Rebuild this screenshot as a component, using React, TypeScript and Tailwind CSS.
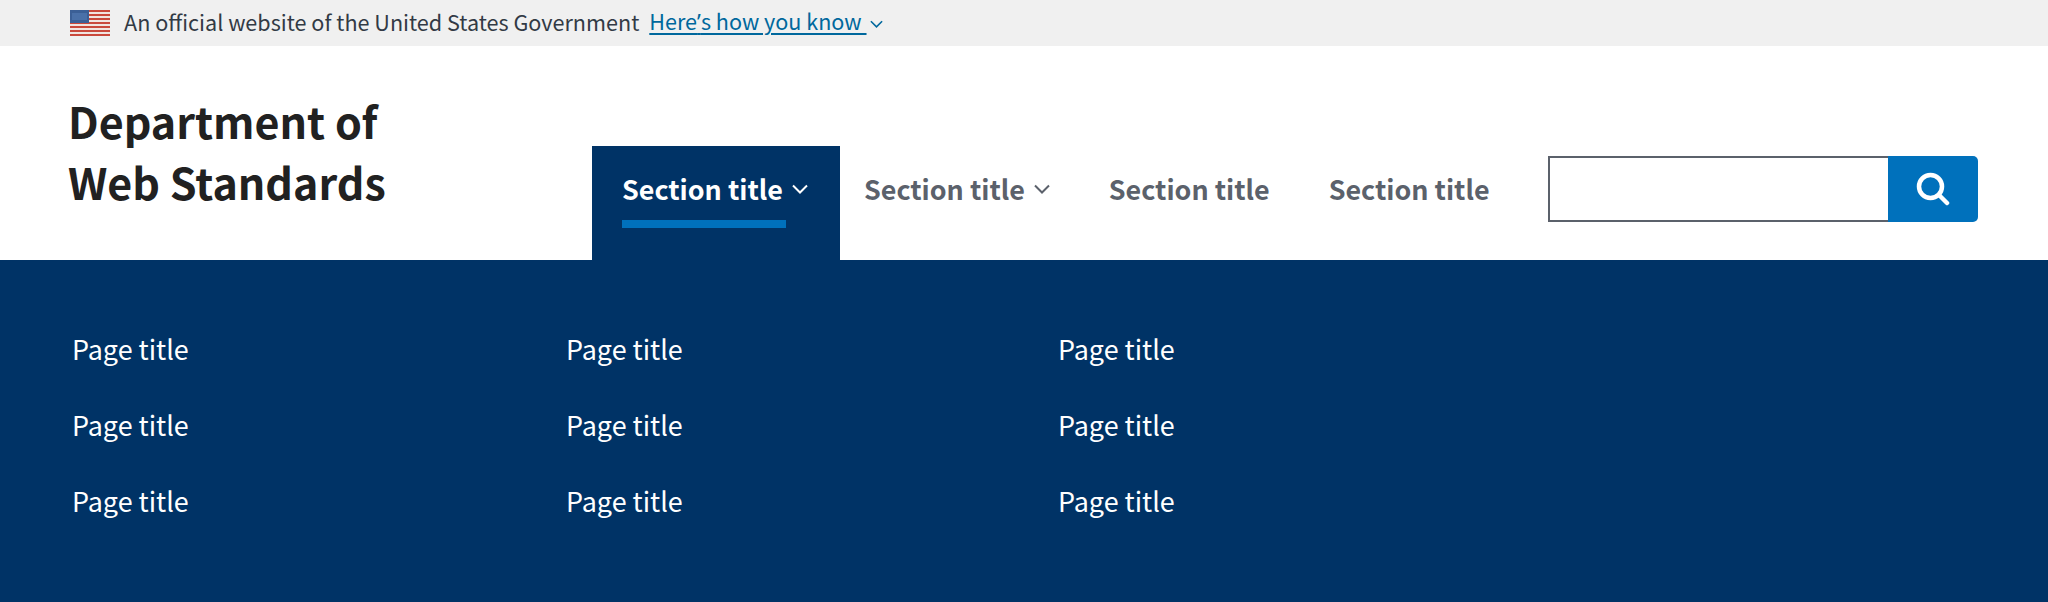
const font = { fontFamily: '"Noto Sans CJK SC", "Noto Sans", sans-serif' };

function Flag() {
  const stripes = [0, 1, 2, 3, 4, 5, 6];
  return (
    <svg width="40" height="26" viewBox="0 0 40 26" className="shrink-0">
      <rect width="40" height="26" fill="#f0e4e0" />
      {stripes.map((s) => (
        <rect key={s} x="0" y={s * 4} width="40" height="2" fill="#c9483b" />
      ))}
      <rect width="19" height="13" fill="#3b5f96" />
      <rect x="2" y="3" width="15" height="7" fill="#4a70a8" />
    </svg>
  );
}

function Chevron({ className }: { className: string }) {
  return (
    <svg viewBox="0 0 16 10" fill="none" stroke="currentColor" strokeWidth="2" className={className}>
      <path d="M1 1.5l7 7 7-7" />
    </svg>
  );
}

function NavItem({ label, active, menu }: { label: string; active?: boolean; menu?: boolean }) {
  return (
    <a
      className={
        active
          ? "flex h-[114px] w-[248px] flex-col bg-[#003366] pl-[30px] pt-[26px] text-white"
          : "flex h-[114px] flex-col pt-[26px] text-[#5b616b]"
      }
    >
      <span className="flex h-[33px] items-center text-[26.9px] font-bold leading-[33px]">
        {label}
        {menu && <Chevron className="ml-[9px] h-[10px] w-[16px]" />}
      </span>
      {active && <span className="mt-[15px] h-2 w-[164px] bg-[#0071bc]" />}
    </a>
  );
}

function PageColumn({ width }: { width: string }) {
  return (
    <ul className={`${width} flex flex-col gap-[38px]`}>
      {[0, 1, 2].map((i) => (
        <li key={i} className="text-[26.9px] leading-[38px] text-white">
          Page title
        </li>
      ))}
    </ul>
  );
}

export default function App() {
  return (
    <div className="h-[602px] w-[2048px] overflow-hidden bg-[#003366]" style={font}>
      <div className="flex h-[46px] items-center bg-[#f0f0f0] pl-[70px] text-[21.6px] text-[#323a45]">
        <Flag />
        <span className="mb-[2px] ml-[14px]">An official website of the United States Government</span>
        <a className="mb-[2px] ml-[10px] text-[#00689d] underline decoration-[2px] underline-offset-[3px]">
          Here<span className="font-['Noto_Sans']">’</span>s how you know&nbsp;
        </a>
        <Chevron className="ml-[3px] mt-[1px] h-[8px] w-[13px] text-[#00689d]" />
      </div>

      <header className="flex h-[214px] items-end bg-white pl-[68px] pr-[70px]">
        <h1 className="mb-[48px] w-[524px] shrink-0 text-[43px] font-bold leading-[61px] text-[#212121]">
          Department of
          <br />
          Web Standards
        </h1>
        <nav className="flex h-[114px] items-start">
          <NavItem label="Section title" active menu />
          <div className="ml-[24px] flex gap-[59px]">
            <NavItem label="Section title" menu />
            <NavItem label="Section title" />
            <NavItem label="Section title" />
          </div>
        </nav>
        <form className="mb-[38px] ml-auto flex h-[66px] shrink-0">
          <input className="h-full w-[340px] border-2 border-r-0 border-[#5b616b] bg-white" />
          <button className="flex h-full w-[90px] items-center justify-center rounded-r-[5px] bg-[#0071bc]">
            <svg width="34" height="34" viewBox="0 0 34 34" fill="none" stroke="white" strokeWidth="4.5">
              <circle cx="14.5" cy="14.5" r="11.5" />
              <path d="M23 23l8 8" strokeLinecap="round" />
            </svg>
          </button>
        </form>
      </header>

      <div className="flex pl-[72px] pt-[70px]">
        <PageColumn width="w-[494px]" />
        <PageColumn width="w-[492px]" />
        <PageColumn width="w-[300px]" />
      </div>
    </div>
  );
}
